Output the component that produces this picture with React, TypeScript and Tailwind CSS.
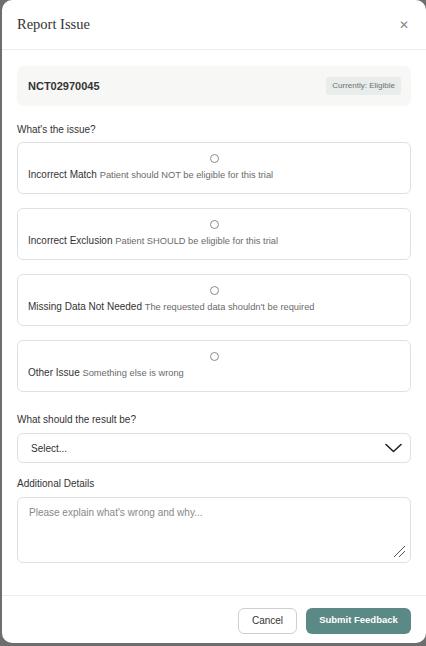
import React, { useState } from "react";

const issues = [
  { id: "match", label: "Incorrect Match", desc: "Patient should NOT be eligible for this trial" },
  { id: "exclusion", label: "Incorrect Exclusion", desc: "Patient SHOULD be eligible for this trial" },
  { id: "missing", label: "Missing Data Not Needed", desc: "The requested data shouldn't be required" },
  { id: "other", label: "Other Issue", desc: "Something else is wrong" },
];

export default function App() {
  const [issue, setIssue] = useState<string | null>(null);

  return (
    <div
      className="h-[646px] w-[426px] bg-[#6e6e6e] pl-[2px] pb-[3px] overflow-hidden"
      style={{ fontFamily: "'Liberation Sans', Arial, sans-serif" }}
    >
      <div className="h-full w-full bg-white rounded-[10px] flex flex-col">
        {/* Header */}
        <div className="h-[50px] border-b border-[#ececec] flex items-center justify-between pl-[15px] pr-[17px] shrink-0">
          <h2 className="text-[14.5px] text-[#333]" style={{ fontFamily: "'Liberation Serif', serif" }}>
            Report Issue
          </h2>
          <button className="text-[#888] text-[12px] leading-none">✕</button>
        </div>

        {/* Body */}
        <div className="flex-1 px-[15px] pt-[16px]">
          <div className="h-[40px] bg-[#f7f7f5] rounded-[7px] flex items-center justify-between pl-[11px] pr-[10px]">
            <span className="text-[11px] font-bold text-[#333]">NCT02970045</span>
            <span className="bg-[#e8ecea] text-[#6b7370] text-[8px] rounded-[3px] px-[6px] h-[18px] flex items-center">
              Currently: Eligible
            </span>
          </div>

          <div className="text-[10px] text-[#333] mt-[16px]">What's the issue?</div>

          <div className="mt-[5px] flex flex-col gap-[14px]">
            {issues.map((it) => (
              <label
                key={it.id}
                className="h-[52px] border border-[#e0e0e0] rounded-[6px] flex flex-col pl-[10px] pr-[10px] cursor-pointer"
              >
                <div className="flex justify-center pt-[11px]">
                  <input
                    type="radio"
                    name="issue"
                    checked={issue === it.id}
                    onChange={() => setIssue(it.id)}
                    className="appearance-none w-[9px] h-[9px] rounded-full border border-[#8a8a8a] checked:bg-[#5b8a86] checked:border-[#5b8a86] m-0"
                  />
                </div>
                <div className="mt-[6px] text-[10px] leading-[12px] whitespace-nowrap">
                  <span className="text-[#333]">{it.label}</span>{" "}
                  <span className="text-[9.3px] text-[#6a6a6a]">{it.desc}</span>
                </div>
              </label>
            ))}
          </div>

          <div className="text-[10px] text-[#333] mt-[20px]">What should the result be?</div>
          <div className="mt-[6px] h-[30px] border border-[#e0e0e0] rounded-[6px] flex items-center justify-between pl-[13px] pr-[8px]">
            <span className="text-[10px] text-[#333]">Select...</span>
            <svg width="17" height="10" viewBox="0 0 17 10" fill="none">
              <path d="M1 1.5 L8.5 8.5 L16 1.5" stroke="#222" strokeWidth="1.6" strokeLinecap="round" strokeLinejoin="round" />
            </svg>
          </div>

          <div className="text-[10px] text-[#333] mt-[13px]">Additional Details</div>
          <div className="mt-[6px] h-[66px] border border-[#e0e0e0] rounded-[6px] relative px-[11px] pt-[8px]">
            <div className="text-[10px] leading-[14px] text-[#888]">Please explain what's wrong and why...</div>
            <svg className="absolute right-[4px] bottom-[4px]" width="13" height="13" viewBox="0 0 13 13">
              <path d="M1 12 L12 1 M6 12 L12 6" stroke="#555" strokeWidth="1" />
            </svg>
          </div>
        </div>

        {/* Footer */}
        <div className="h-[48px] border-t border-[#f0ede8] flex items-center justify-end gap-[9px] pr-[15px] pt-[2px] shrink-0">
          <button className="h-[26px] w-[59px] border border-[#cfcfcf] rounded-[6px] text-[10px] text-[#333] bg-white">
            Cancel
          </button>
          <button className="h-[26px] w-[105px] rounded-[6px] bg-[#5b8a86] text-white text-[9.5px] font-bold">
            Submit Feedback
          </button>
        </div>
      </div>
    </div>
  );
}
